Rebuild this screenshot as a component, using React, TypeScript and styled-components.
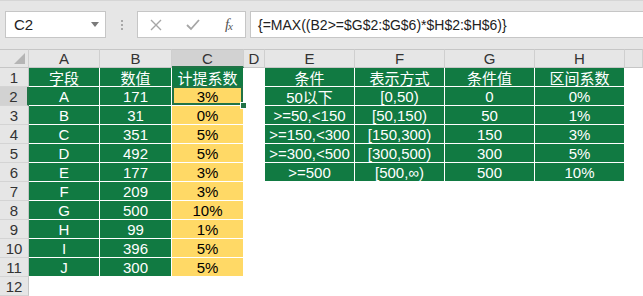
import styled, { createGlobalStyle } from 'styled-components';

const GlobalStyle = createGlobalStyle`
  body {
    margin: 0;
    background: #fff;
    font-family: 'Liberation Sans', Arial, 'Noto Sans CJK SC', sans-serif;
  }
`;

const Page = styled.div`
  width: 643px;
  height: 296px;
  overflow: hidden;
`;

const Toolbar = styled.div`
  height: 49px;
  box-sizing: border-box;
  background: #e6e6e6;
  border-top: 1px solid #d6d6d6;
  display: flex;
  align-items: flex-start;
  padding: 10px 0 0 5px;
`;

const Box = styled.div`
  height: 27px;
  box-sizing: border-box;
  background: #fff;
  border: 1px solid #c6c6c6;
  display: flex;
  align-items: center;
`;

const NameBox = styled(Box)`
  width: 101px;
  padding: 0 6px 0 8px;
  justify-content: space-between;
  font-size: 15px;
  color: #222;
`;

const Caret = styled.span`
  width: 0;
  height: 0;
  border-left: 4px solid transparent;
  border-right: 4px solid transparent;
  border-top: 5px solid #7a7a7a;
`;

const Dots = styled.div`
  width: 31px;
  height: 27px;
  display: flex;
  flex-direction: column;
  align-items: center;
  justify-content: center;
  gap: 2px;
  span {
    width: 2px;
    height: 2px;
    background: #a8a8a8;
  }
`;

const FxGroup = styled(Box)`
  width: 109px;
  justify-content: space-between;
  padding: 0 13px 0 12px;
`;

const Fx = styled.span`
  font-family: 'Liberation Serif', 'Times New Roman', serif;
  font-style: italic;
  font-size: 15px;
  color: #555;
  letter-spacing: -1px;
  sub {
    font-size: 11px;
    vertical-align: -1px;
  }
`;

const Formula = styled(Box)`
  flex: 1;
  margin-left: 4px;
  border-right: none;
  padding-left: 7px;
  font-size: 14px;
  color: #222;
`;

const Sheet = styled.div`
  display: grid;
  grid-template-columns: 29px 71px 72px 72px 21px 90px 90px 90px 90px 1fr;
  grid-auto-rows: 19px;
`;

const ColHead = styled.div<{ $sel?: boolean }>`
  box-sizing: border-box;
  background: ${(p) => (p.$sel ? '#d2d2d2' : '#e6e6e6')};
  border-top: 1px solid #c6c6c6;
  border-right: 1px solid #cfcfcf;
  border-bottom: ${(p) => (p.$sel ? '2px solid #217346' : '1px solid #c6c6c6')};
  display: flex;
  align-items: center;
  justify-content: center;
  font-size: 15px;
  color: #333;
  position: relative;
`;

const Corner = styled(ColHead)`
  svg {
    position: absolute;
    right: 3px;
    bottom: 3px;
  }
`;

const RowHead = styled.div<{ $sel?: boolean }>`
  box-sizing: border-box;
  background: ${(p) => (p.$sel ? '#d2d2d2' : '#e6e6e6')};
  border-right: ${(p) => (p.$sel ? '2px solid #217346' : '1px solid #c6c6c6')};
  border-bottom: 1px solid #d4d4d4;
  display: flex;
  align-items: center;
  justify-content: center;
  font-size: 15px;
  color: #333;
`;

type Fill = 'green' | 'yellow' | 'none';

const Cell = styled.div<{ $fill: Fill; $sel?: boolean }>`
  box-sizing: border-box;
  border-right: 1px solid #fff;
  border-bottom: 1px solid #fff;
  background: ${(p) =>
    p.$fill === 'green' ? '#117a42' : p.$fill === 'yellow' ? '#ffd966' : '#fff'};
  color: ${(p) => (p.$fill === 'yellow' ? '#000' : '#fff')};
  display: flex;
  align-items: center;
  justify-content: center;
  font-size: 15px;
  white-space: nowrap;
  position: relative;
  ${(p) =>
    p.$sel &&
    `
    &::before {
      content: '';
      position: absolute;
      inset: -1px 0 0 0;
      border: 2px solid #217346;
      pointer-events: none;
    }
    &::after {
      content: '';
      position: absolute;
      width: 5px;
      height: 5px;
      right: -4px;
      bottom: -4px;
      background: #217346;
      border: 1px solid #fff;
      z-index: 2;
    }
  `}
`;

const left = [
  ['字段', '数值', '计提系数'],
  ['A', '171', '3%'],
  ['B', '31', '0%'],
  ['C', '351', '5%'],
  ['D', '492', '5%'],
  ['E', '177', '3%'],
  ['F', '209', '3%'],
  ['G', '500', '10%'],
  ['H', '99', '1%'],
  ['I', '396', '5%'],
  ['J', '300', '5%'],
];

const right = [
  ['条件', '表示方式', '条件值', '区间系数'],
  ['50以下', '[0,50)', '0', '0%'],
  ['>=50,<150', '[50,150)', '50', '1%'],
  ['>=150,<300', '[150,300)', '150', '3%'],
  ['>=300,<500', '[300,500)', '300', '5%'],
  ['>=500', '[500,∞)', '500', '10%'],
];

const letters = ['A', 'B', 'C', 'D', 'E', 'F', 'G', 'H', ''];

export default function App() {
  const rows = Array.from({ length: 12 }, (_, i) => i);
  return (
    <Page>
      <GlobalStyle />
      <Toolbar>
        <NameBox>
          C2
          <Caret />
        </NameBox>
        <Dots>
          <span />
          <span />
          <span />
        </Dots>
        <FxGroup>
          <svg width="12" height="12" viewBox="0 0 12 12">
            <path d="M1 1 L11 11 M11 1 L1 11" stroke="#a6a6a6" strokeWidth="1.4" />
          </svg>
          <svg width="14" height="12" viewBox="0 0 14 12">
            <path d="M1 6 L5 10 L13 1" stroke="#a6a6a6" strokeWidth="1.8" fill="none" />
          </svg>
          <Fx>
            f<sub>x</sub>
          </Fx>
        </FxGroup>
        <Formula>{'{=MAX((B2>=$G$2:$G$6)*$H$2:$H$6)}'}</Formula>
      </Toolbar>
      <Sheet>
        <Corner>
          <svg width="11" height="11" viewBox="0 0 11 11">
            <path d="M11 0 L11 11 L0 11 Z" fill="#b5b5b5" />
          </svg>
        </Corner>
        {letters.map((l, i) => (
          <ColHead key={i} $sel={l === 'C'}>
            {l}
          </ColHead>
        ))}
        {rows.map((r) => {
          const l = left[r];
          const g = right[r];
          return [
            <RowHead key={`h${r}`} $sel={r === 1}>
              {r + 1}
            </RowHead>,
            <Cell key={`a${r}`} $fill={l ? 'green' : 'none'}>
              {l?.[0]}
            </Cell>,
            <Cell key={`b${r}`} $fill={l ? 'green' : 'none'}>
              {l?.[1]}
            </Cell>,
            <Cell key={`c${r}`} $fill={l ? (r === 0 ? 'green' : 'yellow') : 'none'} $sel={r === 1}>
              {l?.[2]}
            </Cell>,
            <Cell key={`d${r}`} $fill="none" />,
            ...[0, 1, 2, 3].map((c) => (
              <Cell key={`r${r}${c}`} $fill={g ? 'green' : 'none'}>
                {g?.[c]}
              </Cell>
            )),
            <Cell key={`z${r}`} $fill="none" />,
          ];
        })}
      </Sheet>
    </Page>
  );
}
